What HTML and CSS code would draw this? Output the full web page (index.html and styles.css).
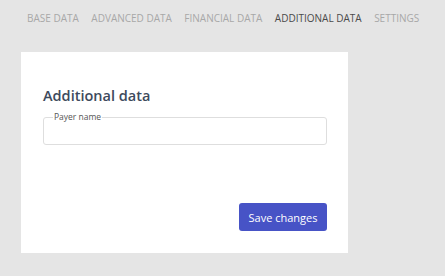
FILE: index.html
```html
<!DOCTYPE html>
<html lang="en">
<head>
    <meta charset="UTF-8">
    <meta name="viewport" content="width=device-width, initial-scale=1.0">
    <title>Additional data</title>
    <link rel="stylesheet" href="styles.css">
</head>
<body>
    <nav class="tabs">
        <a class="tab">Base data</a>
        <a class="tab">Advanced data</a>
        <a class="tab">Financial data</a>
        <a class="tab active">Additional data</a>
        <a class="tab">Settings</a>
    </nav>

    <div class="card">
        <h2>Additional data</h2>
        <fieldset class="field">
            <legend>Payer name</legend>
            <input type="text">
        </fieldset>
        <div class="actions">
            <button>Save changes</button>
        </div>
    </div>
</body>
</html>
```

FILE: styles.css
```css
body {
    font-family: "Open Sans", "Noto Sans", sans-serif;
    background-color: #e5e5e5;
    margin: 0;
    padding: 10px 0 0 21px;
}
.tabs {
    display: flex;
    gap: 12.5px;
    padding-left: 6px;
    height: 42px;
    white-space: nowrap;
}
.tab {
    flex-shrink: 0;
    font-size: 10px;
    text-transform: uppercase;
    color: #a8a8a8;
    line-height: 16px;
}
.tab.active {
    color: #4a4a4a;
}
.card {
    width: 284px;
    background-color: white;
    padding: 34px 21px 22px 22px;
}
h2 {
    font-size: 14.5px;
    font-weight: 600;
    color: #3d4a5c;
    margin: 0 0 7px 0;
    line-height: 20px;
}
.field {
    border: 1px solid #dedede;
    border-radius: 3px;
    margin: 0;
    padding: 0 8px;
}
.field legend {
    font-size: 8.5px;
    color: #555;
    padding: 0 1px;
    margin-left: 1px;
    line-height: 8px;
}
.field input {
    display: block;
    border: none;
    outline: none;
    width: 100%;
    height: 23px;
    font-size: 12px;
    padding: 0;
}
.actions {
    display: flex;
    justify-content: flex-end;
    margin-top: 58px;
}
button {
    background-color: #4753c6;
    color: white;
    border: none;
    border-radius: 3px;
    padding: 0 9.5px;
    height: 28px;
    font-family: inherit;
    font-size: 11px;
}
```
